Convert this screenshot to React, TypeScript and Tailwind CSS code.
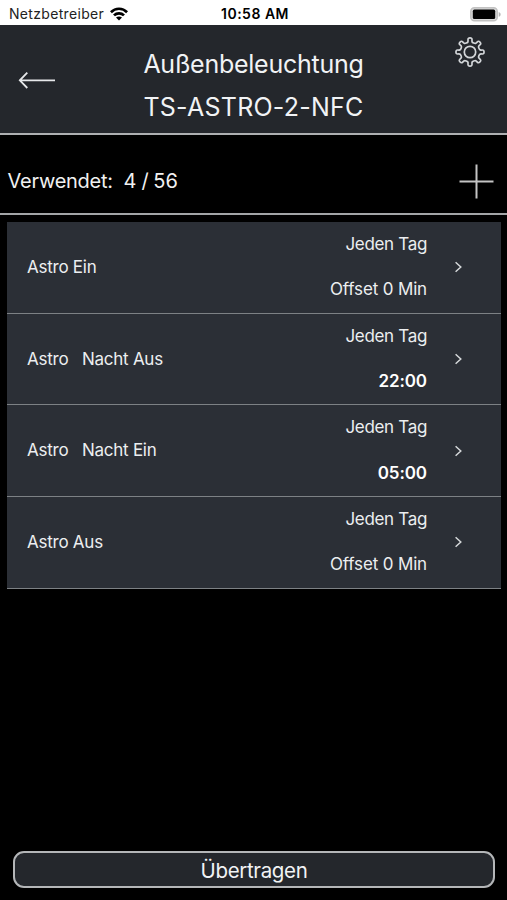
import React from "react";

interface SwitchTime {
  label: string;
  days: string;
  value: string;
  bold?: boolean;
}

const switchTimes: SwitchTime[] = [
  { label: "Astro Ein", days: "Jeden Tag", value: "Offset 0 Min" },
  { label: "Astro   Nacht Aus", days: "Jeden Tag", value: "22:00", bold: true },
  { label: "Astro   Nacht Ein", days: "Jeden Tag", value: "05:00", bold: true },
  { label: "Astro Aus", days: "Jeden Tag", value: "Offset 0 Min" },
];

// Eight-toothed outline, corners softened by curving through edge midpoints
function gearPath() {
  const points: number[][] = [];
  const profile = [
    [-13.5, 9.8],
    [-10, 10.9],
    [-8.6, 14.2],
    [8.6, 14.2],
    [10, 10.9],
    [13.5, 9.8],
  ];
  for (let i = 0; i < 8; i++) {
    for (const [angle, radius] of profile) {
      const a = ((i * 45 + angle - 90) * Math.PI) / 180;
      points.push([radius * Math.cos(a), radius * Math.sin(a)]);
    }
  }
  const mid = (p: number[], q: number[]) =>
    `${((p[0] + q[0]) / 2).toFixed(2)} ${((p[1] + q[1]) / 2).toFixed(2)}`;
  let d = `M${mid(points[points.length - 1], points[0])}`;
  points.forEach((p, i) => {
    d += `Q${p[0].toFixed(2)} ${p[1].toFixed(2)} ${mid(p, points[(i + 1) % points.length])}`;
  });
  return d + "Z";
}

function GearIcon() {
  return (
    <svg width="32" height="32" viewBox="-16 -16 32 32" fill="none" stroke="#d3d6d9" strokeWidth="1.7">
      <path d={gearPath()} />
      <circle r="5.7" />
    </svg>
  );
}

function WifiIcon() {
  return (
    <svg width="18" height="14" viewBox="0 0 18 14" fill="none" stroke="#000" strokeWidth="2.7">
      <path d="M.9 5.2C5.4.6 12.6.6 17.1 5.2" />
      <path d="M4 8.4C6.8 5.6 11.2 5.6 14 8.4" />
      <path d="M9 13.6 6 10.6C7.7 9 10.3 9 12 10.6Z" fill="#000" stroke="none" />
    </svg>
  );
}

function BatteryIcon() {
  return (
    <svg width="31" height="15" viewBox="0 0 31 15">
      <rect x=".8" y=".8" width="26.4" height="13" rx="3.6" fill="#d8d8d8" stroke="#c2c2c2" strokeWidth="1.6" />
      <rect x="2.8" y="2.6" width="22.4" height="9.4" rx="1.6" fill="#000" />
      <path d="M28.7 5v4.8c1.2-.4 1.9-1.3 1.9-2.4s-.7-2-1.9-2.4Z" fill="#b5b5b5" />
    </svg>
  );
}

function StatusBar() {
  return (
    <div className="grid h-[25px] grid-cols-3 items-center bg-white pt-[3px] pr-[6px] pl-[9px] text-black">
      <div className="flex items-center gap-[6px]">
        <span className="text-[14px] leading-none tracking-[0.32px] text-[#222]">Netzbetreiber</span>
        <WifiIcon />
      </div>
      <span className="text-center text-[14px] leading-none font-semibold tracking-[0.5px]">10:58 AM</span>
      <div className="flex justify-end">
        <BatteryIcon />
      </div>
    </div>
  );
}

function Header() {
  return (
    <header className="flex h-[110px] justify-between border-b-2 border-[#aeb0b2] bg-[#24272c]">
      <button className="flex w-[72px] items-center pt-px pl-[18px]">
        <svg width="38" height="18" viewBox="0 0 38 18" fill="none" stroke="#e6e8ea" strokeWidth="1.8">
          <path d="M37 9.3H1.8M9.3 1.6 1.8 9.3l7.5 7.7" />
        </svg>
      </button>
      <h1 className="pt-[18px] text-center text-[25px] leading-[43px] text-[#f1f3f5]">
        <span className="block tracking-[-0.25px]">Außenbeleuchtung</span>
        <span className="block tracking-[0.25px]">TS-ASTRO-2-NFC</span>
      </h1>
      <button className="flex w-[72px] items-start justify-end pt-[11px] pr-[21px]">
        <GearIcon />
      </button>
    </header>
  );
}

function Row({ label, days, value, bold }: SwitchTime) {
  return (
    <li className="flex h-[91.7px] items-center border-b border-[#7d8185] bg-[#2b2f36] pr-[38px] pl-5 text-[17px] text-[#eceef0]">
      <span className="flex-1 pt-px tracking-[-0.25px] whitespace-pre">{label}</span>
      <div className="flex flex-col items-end leading-[45.5px]">
        <span className="tracking-[-0.33px]">{days}</span>
        <span className={bold ? "font-semibold tracking-[-0.1px] text-white" : "tracking-[-0.15px]"}>{value}</span>
      </div>
      <svg className="ml-[27px]" width="9" height="12" viewBox="0 0 9 12" fill="none" stroke="#d5d8da" strokeWidth="1.5">
        <path d="M1.6 1.2 6.8 6 1.6 10.8" />
      </svg>
    </li>
  );
}

export default function App() {
  return (
    <div className="flex h-[900px] w-[507px] flex-col bg-black font-['Inter','Liberation_Sans',sans-serif]">
      <StatusBar />
      <Header />
      <div className="flex h-[80px] items-center justify-between border-b-2 border-[#a3a5a7] pt-[14px] pr-[13px] pl-[7.5px]">
        <p className="text-[20px] tracking-[-0.25px] whitespace-pre text-[#f1f1f1]">
          Verwendet:  4<span className="tracking-[-0.5px]"> / </span>
          <span className="tracking-normal">56</span>
        </p>
        <svg width="35" height="35" viewBox="0 0 35 35" stroke="#c4c4c4" strokeWidth="2">
          <path d="M17.5.5v34M.5 17.5h34" />
        </svg>
      </div>
      <ul className="mx-[7px] mt-[7px] mr-[6px]">
        {switchTimes.map((item) => (
          <Row key={item.label} {...item} />
        ))}
      </ul>
      <button className="mx-[13px] mt-auto mr-3 mb-3 h-[37px] rounded-[11px] border-2 border-[#b4b6b8] bg-[#24272c] pt-[3px] text-[20.5px] leading-none tracking-[-0.35px] text-[#f1f3f5]">
        Übertragen
      </button>
    </div>
  );
}
